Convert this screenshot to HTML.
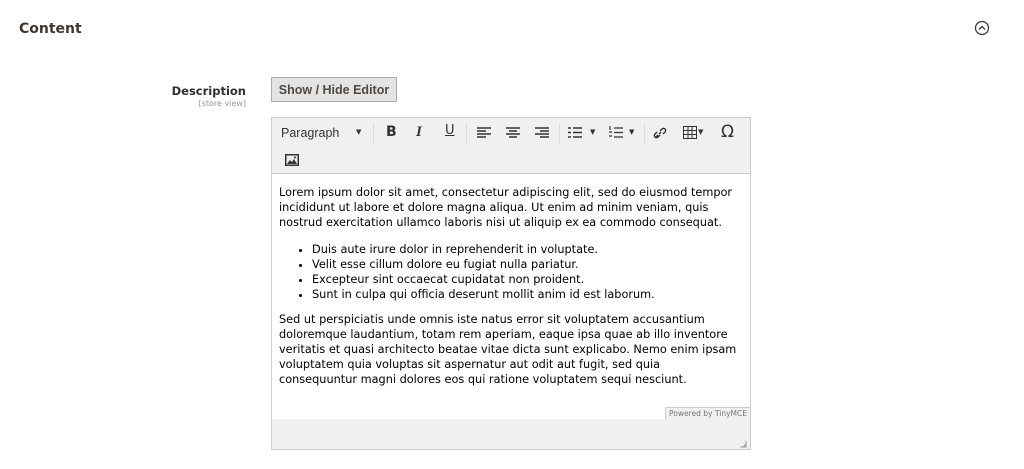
<!DOCTYPE html>
<html><head><style>
body{margin:0;width:1024px;height:469px;background:#fff;font-family:"DejaVu Sans","Liberation Sans",sans-serif;position:relative;overflow:hidden;color:#303030}
.abs{position:absolute}
h2{position:absolute;left:19px;top:21px;margin:0;font-size:14px;font-weight:bold;color:#41362f}
.lbl{position:absolute;right:778px;top:84px;text-align:right;font-size:11.5px;font-weight:bold;color:#303030}
.lbl small{display:block;font-size:8px;font-weight:normal;color:#999;margin-top:1px}
.btn{position:absolute;left:271px;top:77px;width:126px;height:25px;background:#e3e3e3;border:1px solid #adadad;font-family:"Liberation Sans",sans-serif;font-size:12.5px;font-weight:bold;color:#514943;text-align:center;line-height:25px;box-sizing:border-box}
.ed{position:absolute;left:271px;top:117px;width:480px;height:333px;border:1px solid #ccc;box-sizing:border-box;background:#f0f0f0}
.tb{position:absolute;left:0;top:0;width:478px;height:55px;border-bottom:1px solid #ccc}
.cont{position:absolute;left:0;top:56px;width:478px;height:245px;background:#fff;font-size:11.3px;line-height:15px;color:#000}
.cont p{margin:0;position:absolute;left:7px;width:460px}
.cont ul{margin:0;position:absolute;left:0;top:68px;padding-left:40px}
.ti{position:absolute;font-size:13px;color:#333}
.sep{position:absolute;top:5px;width:1px;height:22px;background:#ddd}
</style></head><body>
<h2>Content</h2>
<svg class="abs" style="left:974px;top:20px" width="16" height="16" viewBox="0 0 16 16"><circle cx="8" cy="8" r="6.5" fill="none" stroke="#333" stroke-width="1.2"/><path d="M5 9.5 L8 6.5 L11 9.5" fill="none" stroke="#333" stroke-width="1.3"/></svg>
<div class="lbl">Description<small>[store view]</small></div>
<div class="btn">Show / Hide Editor</div>
<div class="ed">
<div class="tb">
<span class="ti" style="left:9px;top:8px;font-family:'Liberation Sans',sans-serif;font-size:12.5px">Paragraph</span>
<span class="ti" style="left:84px;top:10px;font-size:7px">▼</span>
<div class="sep" style="left:101px"></div>
<span class="ti" style="left:114px;top:6px;font-weight:bold;font-size:14px">B</span>
<span class="ti" style="left:144px;top:6px;font-style:italic;font-family:'Liberation Serif',serif;font-size:15px;font-weight:bold">I</span>
<span class="ti" style="left:173px;top:5px;text-decoration:underline;font-size:13px">U</span>
<div class="sep" style="left:194px"></div>
<svg class="abs" style="left:205px;top:9px" width="14" height="12"><path d="M0 1h14M0 4h9M0 7h14M0 10h9" stroke="#333" stroke-width="1.5"/></svg>
<svg class="abs" style="left:234px;top:9px" width="14" height="12"><path d="M0 1h14M3 4h8M0 7h14M3 10h8" stroke="#333" stroke-width="1.5"/></svg>
<svg class="abs" style="left:263px;top:9px" width="14" height="12"><path d="M0 1h14M5 4h9M0 7h14M5 10h9" stroke="#333" stroke-width="1.5"/></svg>
<div class="sep" style="left:287px"></div>
<svg class="abs" style="left:296px;top:8px" width="14" height="13"><path d="M0 2h3M5 2h9M0 6.5h3M5 6.5h9M0 11h3M5 11h9" stroke="#333" stroke-width="1.6"/></svg>
<span class="ti" style="left:318px;top:10px;font-size:7px">▼</span>
<svg class="abs" style="left:337px;top:8px" width="14" height="13"><path d="M5 2h9M5 6.5h9M5 11h9M1 0v4M0 6h3M0 10h3" stroke="#333" stroke-width="1.2"/></svg>
<span class="ti" style="left:357px;top:10px;font-size:7px">▼</span>
<div class="sep" style="left:372px"></div>
<svg class="abs" style="left:381px;top:8px" width="14" height="14"><path d="M2 12l3-3M4 6l-2 2a2 2 0 003 3l2-2M10 8l2-2a2 2 0 00-3-3l-2 2M6 8l2-2" stroke="#333" stroke-width="1.4" fill="none"/></svg>
<svg class="abs" style="left:411px;top:8px" width="14" height="13"><rect x=".5" y=".5" width="13" height="12" fill="none" stroke="#333"/><path d="M0 4.5h14M0 8.5h14M5 0v13M9 0v13" stroke="#333"/></svg>
<span class="ti" style="left:426px;top:10px;font-size:7px">▼</span>
<span class="ti" style="left:449px;top:4px;font-size:17px">Ω</span>
<svg class="abs" style="left:13px;top:36px" width="14" height="12"><rect x="0" y="0" width="14" height="12" fill="#333"/><rect x="1.5" y="1.5" width="11" height="9" fill="#eee"/><path d="M2 10l3-4 2 2 2-3 3 5z" fill="#333"/><circle cx="10" cy="3.5" r="1" fill="#333"/></svg>
</div>
<div class="cont">
<p style="top:11px">Lorem ipsum dolor sit amet, consectetur adipiscing elit, sed do eiusmod tempor incididunt ut labore et dolore magna aliqua. Ut enim ad minim veniam, quis nostrud exercitation ullamco laboris nisi ut aliquip ex ea commodo consequat.</p>
<ul><li>Duis aute irure dolor in reprehenderit in voluptate.</li><li>Velit esse cillum dolore eu fugiat nulla pariatur.</li><li>Excepteur sint occaecat cupidatat non proident.</li><li>Sunt in culpa qui officia deserunt mollit anim id est laborum.</li></ul>
<p style="top:138px">Sed ut perspiciatis unde omnis iste natus error sit voluptatem accusantium doloremque laudantium, totam rem aperiam, eaque ipsa quae ab illo inventore veritatis et quasi architecto beatae vitae dicta sunt explicabo. Nemo enim ipsam voluptatem quia voluptas sit aspernatur aut odit aut fugit, sed quia consequuntur magni dolores eos qui ratione voluptatem sequi nesciunt.</p>
<div class="abs" style="right:0;bottom:0;width:84px;height:11px;background:#f0f0f0;border-left:1px solid #ccc;border-top:1px solid #ccc;font-size:7.5px;color:#777;line-height:11px;text-align:center">Powered by TinyMCE</div>
</div>
<svg class="abs" style="left:467px;top:322px" width="8" height="8"><path d="M7 1v6H1M7 4L4 7" stroke="#999" stroke-width="1" fill="none"/></svg>
</div>
</body></html>
